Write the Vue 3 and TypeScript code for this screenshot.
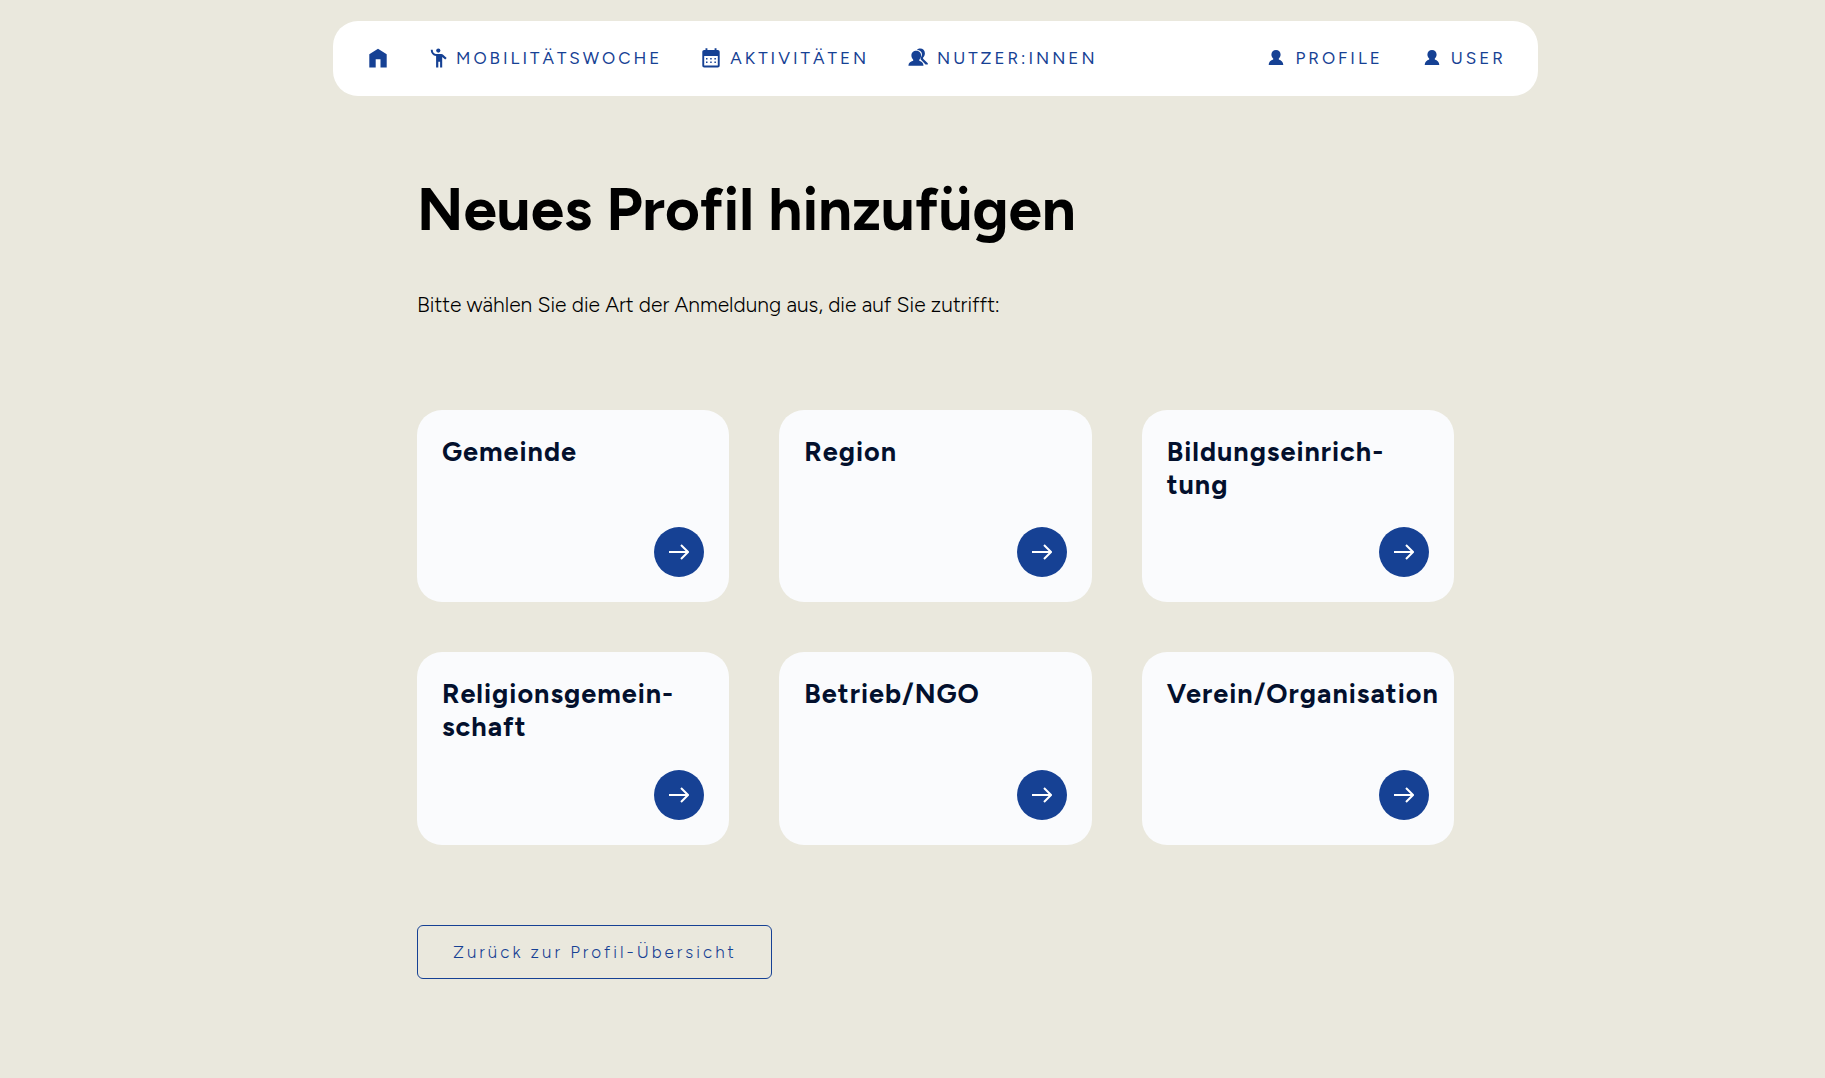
<script setup lang="ts">
interface NavItem {
  label: string
  icon: 'home' | 'greeting' | 'calendar' | 'users' | 'user'
}

interface ProfileType {
  id: string
  lines: string[]
}

const mainNav: NavItem[] = [
  { label: '', icon: 'home' },
  { label: 'Mobilitätswoche', icon: 'greeting' },
  { label: 'Aktivitäten', icon: 'calendar' },
  { label: 'Nutzer:innen', icon: 'users' },
]

const accountNav: NavItem[] = [
  { label: 'Profile', icon: 'user' },
  { label: 'User', icon: 'user' },
]

const profileTypes: ProfileType[] = [
  { id: 'gemeinde', lines: ['Gemeinde'] },
  { id: 'region', lines: ['Region'] },
  { id: 'bildung', lines: ['Bildungseinrich-', 'tung'] },
  { id: 'religion', lines: ['Religionsgemein-', 'schaft'] },
  { id: 'betrieb', lines: ['Betrieb/NGO'] },
  { id: 'verein', lines: ['Verein/Organisation'] },
]
</script>

<template>
  <div class="page">
    <header class="topbar">
      <nav v-for="(group, g) in [mainNav, accountNav]" :key="g" class="nav-group">
        <a
          v-for="item in group"
          :key="item.icon + item.label"
          href="#"
          class="nav-link"
          :aria-label="item.label || 'Startseite'"
        >
          <svg class="nav-icon" viewBox="0 0 20 20" aria-hidden="true">
            <path v-if="item.icon === 'home'" d="M1.300 19.400V6.200L10 .8l8.700 5.400v13.200h-6.200V11.300H7.700v8.100z" />
            <template v-else-if="item.icon === 'greeting'">
              <circle cx="11.300" cy="2.600" r="2.100" />
              <path d="M3.700 1.700h2c.1 2.400 1.200 4 3.200 4.300h5.300c1 0 1.600.3 2.200.9l3.300 3.200-1.500 1.500-3-2.600v10.500h-2.100V13.700h-1.800v5.800H9.100V8.100C5.900 7.500 3.800 5.200 3.700 1.700z" />
            </template>
            <path
              v-else-if="item.icon === 'calendar'"
              fill-rule="evenodd"
              d="M4.500.3h1.900V2h7.200V.3h1.900V2h1.200c1.300 0 2 .7 2 2v13.400c0 1.300-.7 2-2 2H3.300c-1.300 0-2-.7-2-2V4c0-1.300.7-2 2-2h1.200zM3.200 8v9.500h13.600V8zM5 10h1.500v1.500H5zm4.200 0h1.500v1.500H9.200zm4.200 0h1.500v1.500h-1.500zM5 13.500h1.500V15H5zm4.200 0h1.500V15H9.200zm4.200 0h1.500V15h-1.500z"
            />
            <template v-else-if="item.icon === 'users'">
              <path d="M8.900 1.900c1-1 2.200-1.300 3.300-1.300 2.700 0 4.700 2 4.700 4.700 0 1.700-.7 3.300-1.800 4.200v1.300l4.700 4.400v1.300h-2.300l-4.900-5.300v-1.400c1-1.100 1.300-2.200 1.300-3.700 0-2.200-2-4.200-5-4.200z" />
              <path d="M8.200 2.800c2.700 0 4.900 1.900 4.900 4.800 0 1.600-.7 3.200-1.800 4.100v1.100c2.600.9 4 2.100 4.200 4.900H.4c.2-2.800 1.800-4 4.800-4.900v-1.100c-1.100-.9-1.800-2.500-1.800-4.100 0-2.900 2.100-4.800 4.800-4.800z" />
            </template>
            <path v-else d="M10 1.900c2.700 0 4.600 1.900 4.600 4.600 0 1.600-.7 3-1.800 3.900v1.100c2.500.9 4.500 2.400 4.500 5.400H2.700c0-3 2-4.500 4.500-5.400v-1.100c-1.100-.9-1.800-2.300-1.800-3.900C5.400 3.800 7.300 1.900 10 1.900z" />
          </svg>
          <span v-if="item.label">{{ item.label }}</span>
        </a>
      </nav>
    </header>

    <main class="content">
      <h1>Neues Profil hinzufügen</h1>
      <p class="intro">Bitte wählen Sie die Art der Anmeldung aus, die auf Sie zutrifft:</p>

      <div class="cards">
        <a v-for="type in profileTypes" :key="type.id" href="#" class="card">
          <h2>
            <template v-for="(line, i) in type.lines" :key="i"><br v-if="i > 0" />{{ line }}</template>
          </h2>
          <span class="arrow">
            <svg viewBox="0 0 20 20" aria-hidden="true"><path d="M0 10h19M12 3l7 7-7 7" /></svg>
          </span>
        </a>
      </div>

      <button type="button" class="back">Zurück zur Profil-Übersicht</button>
    </main>
  </div>
</template>

<style>
body {
  margin: 0;
  background: #eae8dd;
}
</style>

<style scoped>
.page {
  box-sizing: border-box;
  min-height: 100vh;
  padding: 21px 0 98px 46px;
  background: #eae8dd;
  color: #000;
  font-family: Figtree, Lato, "Open Sans", sans-serif;
}

.topbar {
  box-sizing: border-box;
  display: flex;
  align-items: center;
  justify-content: space-between;
  max-width: 1205px;
  min-height: 75px;
  margin: 0 auto;
  padding: 0 32px 2px 35px;
  border-radius: 25px;
  background: #fff;
}

.nav-group {
  display: flex;
  align-items: center;
  gap: 39px;
}

.nav-link {
  display: flex;
  align-items: center;
  gap: 9px;
  color: #164194;
  font-size: 17px;
  line-height: 24px;
  letter-spacing: 3px;
  text-decoration: none;
  text-transform: uppercase;
}

.nav-icon {
  width: 20px;
  height: 20px;
  fill: currentColor;
}

.content {
  max-width: 1037px;
  margin: 0 auto;
}

h1 {
  margin: 78px 0 0;
  font-size: 60px;
  font-weight: 700;
  line-height: 70px;
}

.intro {
  margin: 46px 0 0;
  font-size: 21px;
  font-weight: 300;
  line-height: 30px;
}

.cards {
  display: grid;
  grid-template-columns: repeat(3, minmax(0, 1fr));
  gap: 50px;
  margin-top: 90px;
}

.card {
  box-sizing: border-box;
  display: flex;
  flex-direction: column;
  justify-content: space-between;
  aspect-ratio: 1.623;
  padding: 25px;
  border-radius: 25px;
  background: #fafbfd;
  color: #03102d;
  text-decoration: none;
}

h2 {
  margin: 0;
  font-size: 27px;
  font-weight: 700;
  line-height: 33px;
  letter-spacing: 1px;
}

.arrow {
  display: flex;
  align-items: center;
  justify-content: center;
  align-self: flex-end;
  width: 50px;
  height: 50px;
  border-radius: 50%;
  background: #164194;
}

.arrow svg {
  width: 20px;
  height: 20px;
  fill: none;
  stroke: #fff;
  stroke-width: 2;
}

.back {
  display: block;
  margin-top: 80px;
  padding: 14px 34px 14px 35px;
  border: 1px solid #164194;
  border-radius: 6px;
  background: transparent;
  color: #164194;
  font-family: inherit;
  font-size: 17px;
  font-weight: 300;
  line-height: 24px;
  letter-spacing: 3px;
}
</style>
